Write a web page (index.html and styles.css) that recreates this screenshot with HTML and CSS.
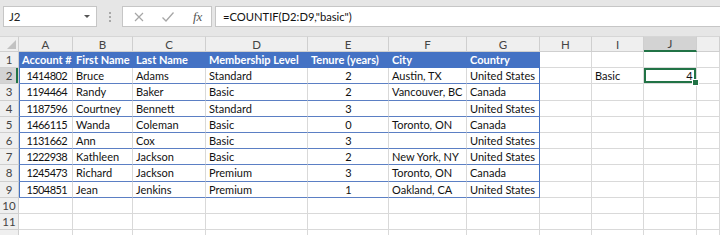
FILE: index.html
```html
<!DOCTYPE html>
<html lang="en">
<head>
    <meta charset="UTF-8">
    <title>COUNTIF - Membership</title>
    <link rel="stylesheet" href="styles.css">
</head>
<body>
    <div class="formula-bar">
        <div class="name-box">
            <span>J2</span>
            <span class="name-arrow"></span>
        </div>
        <div class="bar-dots"><i></i><i></i><i></i></div>
        <div class="fx-group">
            <svg class="fx-icon" width="12" height="12" viewBox="0 0 12 12">
                <path d="M2 2 L10 10 M10 2 L2 10" stroke="#a6a6a6" stroke-width="1.2" fill="none"/>
            </svg>
            <svg class="fx-icon" width="14" height="12" viewBox="0 0 14 12">
                <path d="M1.5 6.5 L5 10 L12.5 1.5" stroke="#a6a6a6" stroke-width="1.3" fill="none"/>
            </svg>
            <span class="fx-label">fx</span>
        </div>
        <div class="formula-input">=COUNTIF(D2:D9,"basic")</div>
    </div>

    <table class="sheet">
        <colgroup>
            <col class="c-row">
            <col class="c-a"><col class="c-b"><col class="c-c"><col class="c-d">
            <col class="c-e"><col class="c-f"><col class="c-g"><col class="c-h">
            <col class="c-i"><col class="c-j"><col class="c-k">
        </colgroup>
        <thead>
            <tr>
                <th class="corner"><span class="corner-tri"></span></th>
                <th>A</th><th>B</th><th>C</th><th>D</th><th>E</th><th>F</th><th>G</th><th>H</th><th>I</th><th class="col-sel">J</th><th></th>
            </tr>
        </thead>
        <tbody>
            <tr class="head-row">
                <th class="rn">1</th>
                <td class="t first">Account #</td><td class="t">First Name</td><td class="t">Last Name</td><td class="t">Membership Level</td><td class="t">Tenure (years)</td><td class="t">City</td><td class="t last">Country</td>
                <td></td><td></td><td></td><td></td>
            </tr>
            <tr>
                <th class="rn row-sel">2</th>
                <td class="t first num">1414802</td><td class="t">Bruce</td><td class="t">Adams</td><td class="t">Standard</td><td class="t mid">2</td><td class="t">Austin, TX</td><td class="t last">United States</td>
                <td></td><td>Basic</td><td class="num selected">4<span class="handle"></span></td><td></td>
            </tr>
            <tr>
                <th class="rn">3</th>
                <td class="t first num">1194464</td><td class="t">Randy</td><td class="t">Baker</td><td class="t">Basic</td><td class="t mid">2</td><td class="t">Vancouver, BC</td><td class="t last">Canada</td>
                <td></td><td></td><td></td><td></td>
            </tr>
            <tr>
                <th class="rn">4</th>
                <td class="t first num">1187596</td><td class="t">Courtney</td><td class="t">Bennett</td><td class="t">Standard</td><td class="t mid">3</td><td class="t"></td><td class="t last">United States</td>
                <td></td><td></td><td></td><td></td>
            </tr>
            <tr>
                <th class="rn">5</th>
                <td class="t first num">1466115</td><td class="t">Wanda</td><td class="t">Coleman</td><td class="t">Basic</td><td class="t mid">0</td><td class="t">Toronto, ON</td><td class="t last">Canada</td>
                <td></td><td></td><td></td><td></td>
            </tr>
            <tr>
                <th class="rn">6</th>
                <td class="t first num">1131662</td><td class="t">Ann</td><td class="t">Cox</td><td class="t">Basic</td><td class="t mid">3</td><td class="t"></td><td class="t last">United States</td>
                <td></td><td></td><td></td><td></td>
            </tr>
            <tr>
                <th class="rn">7</th>
                <td class="t first num">1222938</td><td class="t">Kathleen</td><td class="t">Jackson</td><td class="t">Basic</td><td class="t mid">2</td><td class="t">New York, NY</td><td class="t last">United States</td>
                <td></td><td></td><td></td><td></td>
            </tr>
            <tr>
                <th class="rn">8</th>
                <td class="t first num">1245473</td><td class="t">Richard</td><td class="t">Jackson</td><td class="t">Premium</td><td class="t mid">3</td><td class="t">Toronto, ON</td><td class="t last">Canada</td>
                <td></td><td></td><td></td><td></td>
            </tr>
            <tr>
                <th class="rn">9</th>
                <td class="t first num">1504851</td><td class="t">Jean</td><td class="t">Jenkins</td><td class="t">Premium</td><td class="t mid">1</td><td class="t">Oakland, CA</td><td class="t last">United States</td>
                <td></td><td></td><td></td><td></td>
            </tr>
            <tr>
                <th class="rn">10</th>
                <td></td><td></td><td></td><td></td><td></td><td></td><td></td><td></td><td></td><td></td><td></td>
            </tr>
            <tr>
                <th class="rn">11</th>
                <td></td><td></td><td></td><td></td><td></td><td></td><td></td><td></td><td></td><td></td><td></td>
            </tr>
            <tr>
                <th class="rn"></th>
                <td></td><td></td><td></td><td></td><td></td><td></td><td></td><td></td><td></td><td></td><td></td>
            </tr>
        </tbody>
    </table>
</body>
</html>
```

FILE: styles.css
```css
body {
    margin: 0;
    background-color: #ffffff;
    font-family: Lato, 'Open Sans', sans-serif;
    overflow: hidden;
}

/* 数式バー */
.formula-bar {
    height: 36px;
    background-color: #e6e6e6;
    display: flex;
    align-items: flex-start;
    padding-top: 6px;
    box-sizing: border-box;
}
.name-box {
    margin-left: 3px;
    width: 94px;
    height: 21px;
    background-color: #ffffff;
    border: 1px solid #c6c6c6;
    box-sizing: border-box;
    display: flex;
    align-items: center;
    justify-content: space-between;
    padding: 0 6px 0 5px;
    font-size: 11.5px;
    color: #222;
}
.name-arrow {
    width: 0;
    height: 0;
    border-left: 3px solid transparent;
    border-right: 3px solid transparent;
    border-top: 3px solid #555;
}
.bar-dots {
    width: 25px;
    height: 21px;
    display: flex;
    flex-direction: column;
    align-items: center;
    justify-content: center;
    gap: 2px;
}
.bar-dots i {
    width: 2px;
    height: 2px;
    background-color: #a8a8a8;
}
.fx-group {
    width: 90px;
    height: 21px;
    background-color: #ffffff;
    border: 1px solid #c6c6c6;
    box-sizing: border-box;
    display: flex;
    align-items: center;
    padding-left: 10px;
    gap: 16px;
}
.fx-label {
    font-family: 'Liberation Serif', serif;
    font-style: italic;
    font-size: 13px;
    color: #555;
    margin-left: 2px;
}
.formula-input {
    flex: 1;
    margin-left: 3px;
    height: 21px;
    background-color: #ffffff;
    border: 1px solid #c6c6c6;
    border-right: none;
    box-sizing: border-box;
    display: flex;
    align-items: center;
    padding-left: 7px;
    font-size: 11.2px;
    color: #111;
}

/* シート */
.sheet {
    border-collapse: separate;
    border-spacing: 0;
    table-layout: fixed;
    width: 720px;
}
.c-row { width: 19px; }
.c-a { width: 54px; }
.c-b { width: 60px; }
.c-c { width: 73px; }
.c-d { width: 102px; }
.c-e { width: 81px; }
.c-f { width: 78px; }
.c-g { width: 73px; }
.c-h { width: 52px; }
.c-i { width: 52px; }
.c-j { width: 53px; }
.c-k { width: 23px; }

.sheet tr {
    height: 16.2px;
}
.sheet th {
    background-color: #efefef;
    border-right: 1px solid #cfcfcf;
    border-bottom: 1px solid #cfcfcf;
    font-weight: normal;
    font-size: 11.5px;
    color: #444;
    padding: 0;
    text-align: center;
}
.sheet thead tr {
    height: 16px;
}
.sheet thead th {
    border-top: 1px solid #d6d6d6;
}
.corner {
    position: relative;
}
.corner-tri {
    position: absolute;
    right: 2px;
    bottom: 2px;
    width: 0;
    height: 0;
    border-left: 9px solid transparent;
    border-bottom: 9px solid #c2c2c2;
}
.col-sel {
    background-color: #d3d3d3 !important;
    border-bottom: 2px solid #217346 !important;
}
.row-sel {
    background-color: #d3d3d3 !important;
    box-shadow: inset -2px 0 #217346;
}
.sheet td {
    border-right: 1px solid #d9d9d9;
    border-bottom: 1px solid #d9d9d9;
    padding: 0 2px 0 3px;
    font-size: 11px;
    color: #111;
    white-space: nowrap;
    overflow: hidden;
}
.sheet td.num {
    text-align: right;
    padding-right: 5px;
    letter-spacing: -0.6px;
}
.sheet td.mid {
    text-align: center;
}

/* テーブル範囲 */
.sheet td.t {
    border-bottom-color: #5b7fc4;
}
.sheet td.first {
    box-shadow: inset 1px 0 #4472c4;
}
.sheet td.last {
    border-right-color: #4472c4;
}
.head-row td.t {
    background-color: #4472c4;
    color: #ffffff;
    font-weight: bold;
    border-right-color: #4472c4;
    border-bottom-color: #4472c4;
}

.sheet td.selected {
    position: relative;
    overflow: visible;
    box-shadow: inset 0 0 0 2px #217346;
    padding-right: 4px;
}
.handle {
    position: absolute;
    right: -3px;
    bottom: -3px;
    width: 5px;
    height: 5px;
    background-color: #217346;
    border: 1px solid #ffffff;
}
```
